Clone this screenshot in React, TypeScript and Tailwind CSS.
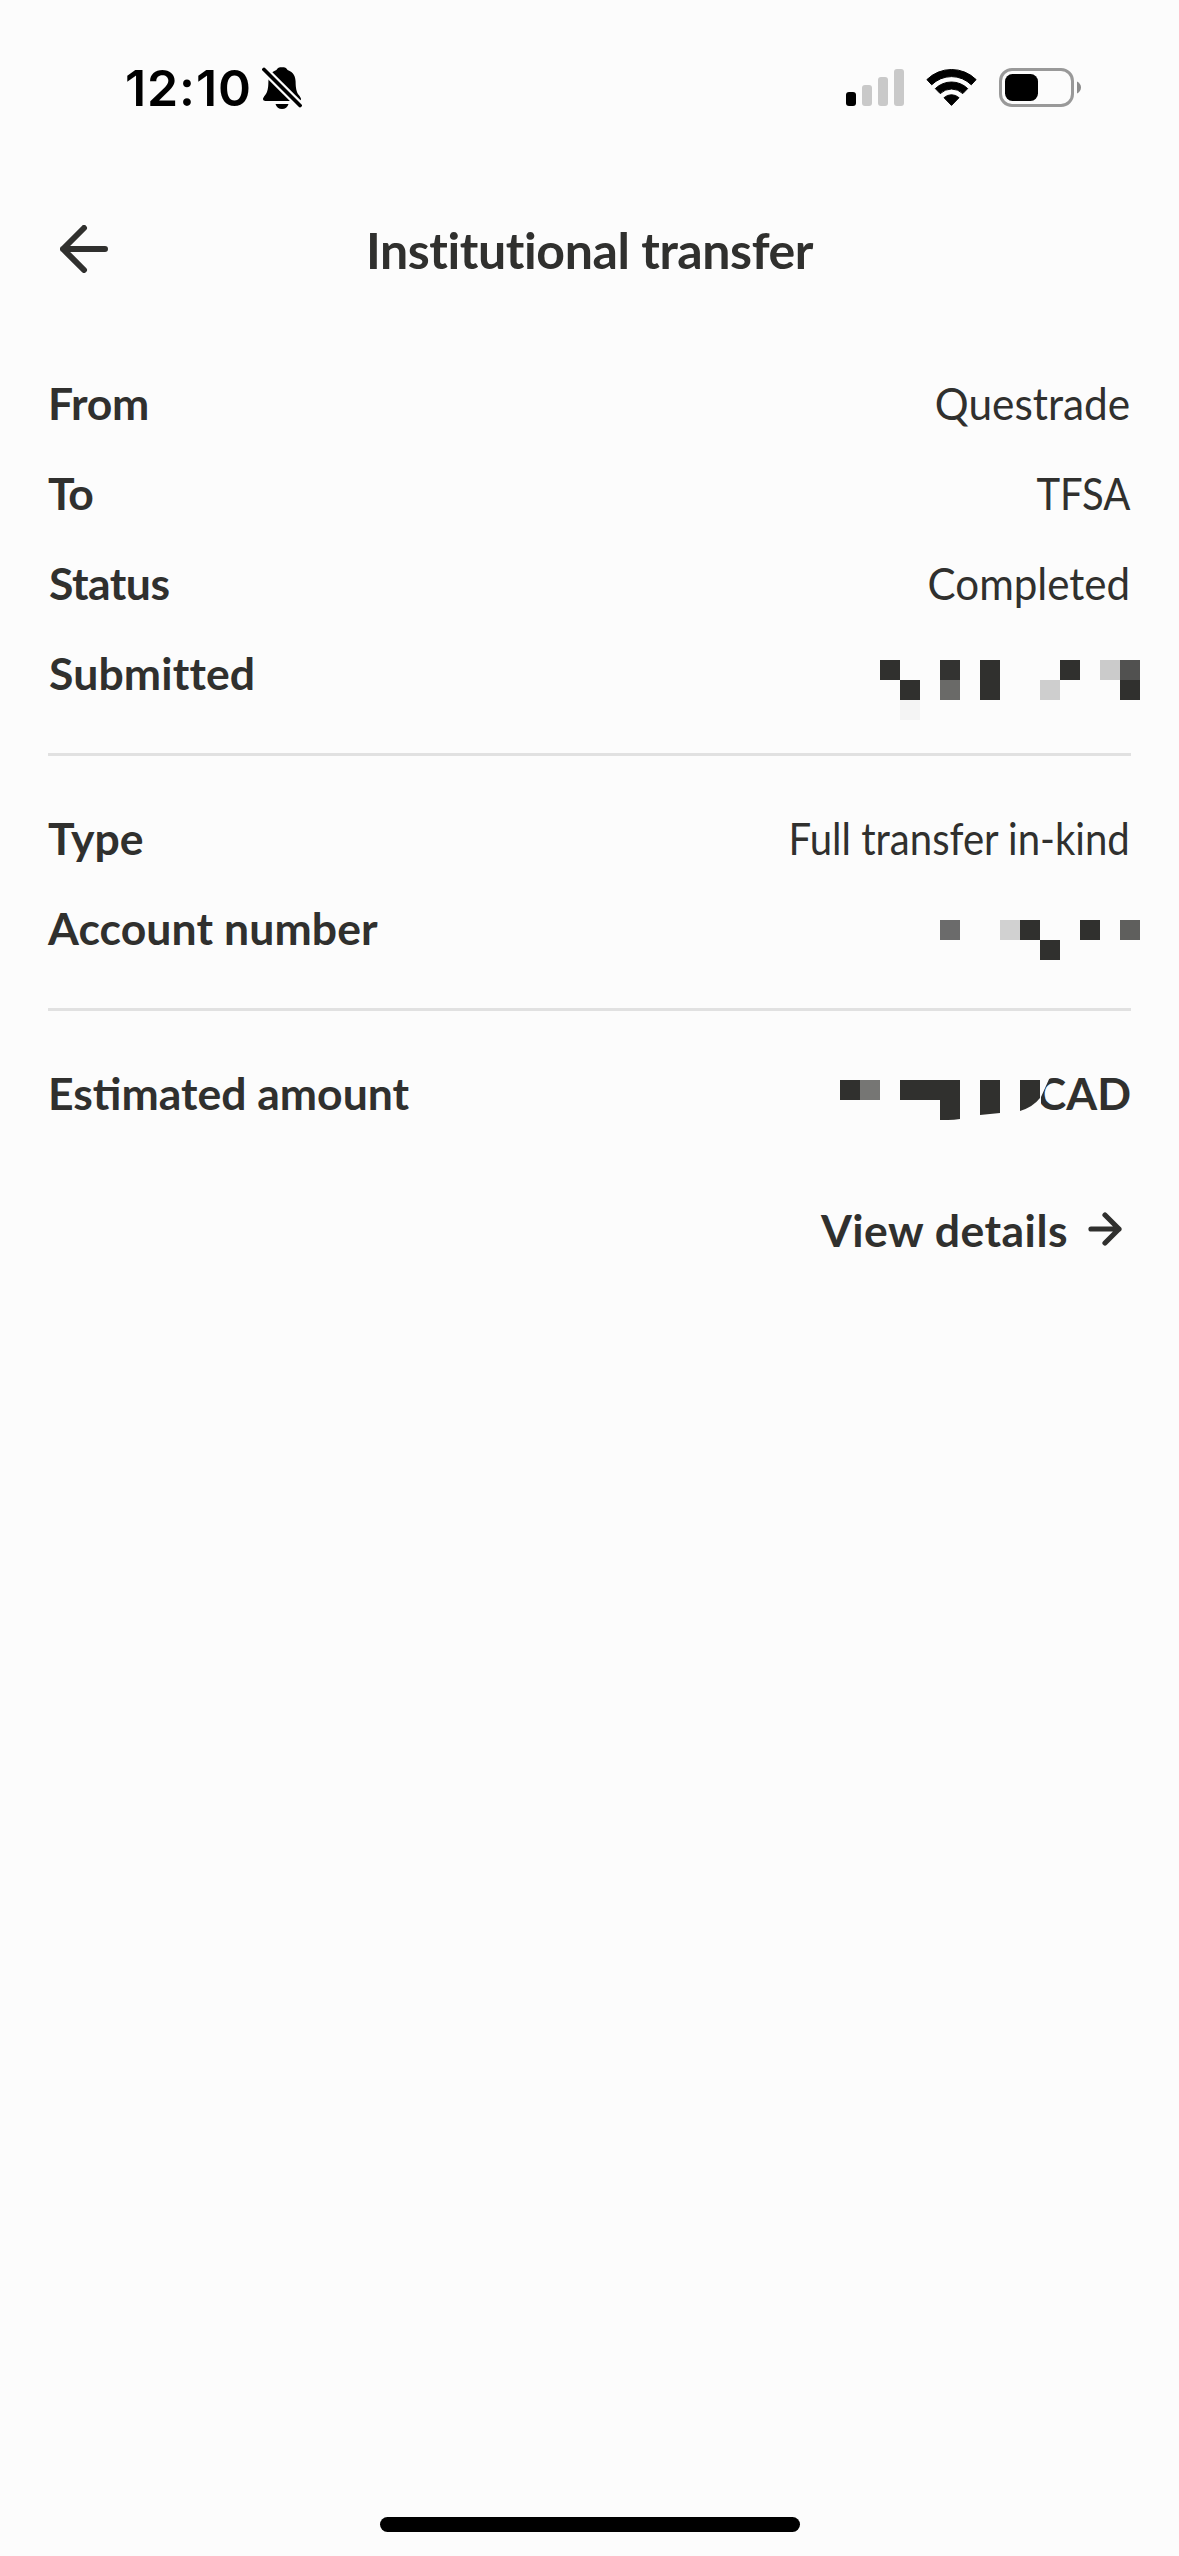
import type { ReactNode } from 'react';

const INK = '#30302e';

function BellSlash() {
  return (
    <svg className="ml-[10px]" width="40" height="44" viewBox="0 0 40 44">
      <path
        d="M20 1c-2.800 0-4.600 1.200-5.600 3-6 2-7.900 6.800-8 11.500-.1 7-.9 10.700-3.200 13.500C1.700 31 1 32 1 33c0 1.300 1 2 2.500 2h33c1.500 0 2.500-.8 2.500-2 0-1-.7-2-2.200-4-2.300-2.800-3.100-6.500-3.200-13.500-.1-4.700-2-9.500-8-11.500-1-1.800-2.800-3-5.600-3z"
        fill="#000"
      />
      <path d="M13.500 38h13c-.8 3-3.300 5-6.500 5s-5.700-2-6.500-5z" fill="#000" />
      <path d="M2 3.500 38.500 40" stroke="#fcfcfc" strokeWidth="8" />
      <path d="M2 3.500 38 39.500" stroke="#000" strokeWidth="3.800" strokeLinecap="round" />
    </svg>
  );
}

function Signal() {
  return (
    <svg width="58" height="38" viewBox="0 0 58 38">
      <rect x="0" y="23" width="10" height="14" rx="3" fill="#000" />
      <rect x="16" y="16" width="10" height="21" rx="3" fill="#c9c9c9" />
      <rect x="32" y="8" width="10" height="29" rx="3" fill="#c9c9c9" />
      <rect x="48" y="0" width="10" height="37" rx="3" fill="#c9c9c9" />
    </svg>
  );
}

function Wifi() {
  return (
    <svg className="ml-[22px]" width="51" height="38" viewBox="0 0 51 38">
      <path d="M.9 10.600a35 35 0 0 1 49.200 0L45.300 15.800a28 28 0 0 0-39.600 0z" fill="#000" stroke="#000" strokeWidth="1" strokeLinejoin="round" />
      <path d="M9.300 19.600a23.200 23.200 0 0 1 32.400 0L36.800 24.600a16.200 16.200 0 0 0-22.600 0z" fill="#000" stroke="#000" strokeWidth="1" strokeLinejoin="round" />
      <path d="M18 28.700a11 11 0 0 1 15 0L25.500 36.400z" fill="#000" stroke="#000" strokeWidth="1" strokeLinejoin="round" />
    </svg>
  );
}

function Battery() {
  return (
    <svg className="-mt-px ml-[22px]" width="82" height="39" viewBox="0 0 82 39">
      <rect x="1.500" y="1.500" width="72" height="36" rx="11.500" fill="none" stroke="#999" strokeWidth="3" />
      <rect x="6" y="6" width="33" height="27" rx="7.500" fill="#000" />
      <path d="M78 13.500c2.400 1 4 3.400 4 6s-1.600 5-4 6z" fill="#8c8c8c" />
    </svg>
  );
}

function Row({ label, children }: { label: ReactNode; children: ReactNode }) {
  return (
    <div className="flex h-[60px] items-start justify-between">
      <div className="font-bold">{label}</div>
      {children}
    </div>
  );
}

/* Each cell is [column, row, colour] on a 20px mosaic. */
type Cell = [number, number, string];

const submittedCells: Cell[] = [
  [0, 0, INK], [3, 0, '#333331'], [5, 0, INK], [9, 0, INK], [11, 0, '#cbcbcb'], [12, 0, '#515150'],
  [1, 1, INK], [3, 1, '#6a6a68'], [5, 1, INK], [8, 1, '#cecece'], [12, 1, INK],
  [1, 2, '#f4f4f4'],
];

const accountCells: Cell[] = [
  [0, 0, '#6b6b6b'], [3, 0, '#d1d1d1'], [4, 0, INK], [7, 0, INK], [9, 0, '#5f5f5d'], [5, 1, INK],
];

function Mosaic({ cells, className }: { cells: Cell[]; className: string }) {
  return (
    <svg className={className} shapeRendering="crispEdges">
      {cells.map(([x, y, fill]) => (
        <rect key={`${x}-${y}`} x={x * 20} y={y * 20} width="20" height="20" fill={fill} />
      ))}
    </svg>
  );
}

export default function App() {
  return (
    <div className="flex h-[2556px] w-[1179px] flex-col bg-[#fcfcfc] font-['Lato',sans-serif] text-[44.5px] leading-[62px] whitespace-nowrap text-[#30302e]">
      <div className="flex h-[176px] items-center pr-[98px] pl-[125px] text-black">
        <span className="font-['Inter',sans-serif] text-[50px] font-semibold tracking-[0.9px]">12:10</span>
        <BellSlash />
        <div className="ml-auto flex items-center">
          <Signal />
          <Wifi />
          <Battery />
        </div>
      </div>

      <header className="mt-[22px] grid h-[102px] grid-cols-[120px_1fr_120px] items-center">
        <svg className="ml-[60px]" width="48" height="48" viewBox="0 0 48 48" fill="none" stroke={INK} strokeWidth="6" strokeLinecap="round" strokeLinejoin="round">
          <path d="M24 3 3 24l21 21M3 24h42" />
        </svg>
        <h1 className="pt-[2px] text-center text-[50px] font-bold tracking-[-0.4px]">Institutional transfer</h1>
      </header>

      <main className="flex flex-col pt-[72px] pr-[48px] pl-[48px]">
        <section className="flex flex-col gap-[30px]">
          <Row label={<span className="tracking-[-0.3px]">From</span>}>
            <span className="mr-[0.6px] origin-right scale-x-[0.952]">Questrade</span>
          </Row>
          <Row label={<span className="tracking-[-1px]">To</span>}>
            <span className="mr-px origin-right scale-x-[0.9]">TFSA</span>
          </Row>
          <Row label={<span className="ml-px tracking-[-0.5px]">Status</span>}>
            <span className="mr-[1.3px] origin-right scale-x-[0.946]">Completed</span>
          </Row>
          <Row label={<span className="ml-px tracking-[0.15px]">Submitted</span>}>
            <Mosaic cells={submittedCells} className="mt-[18px] mr-[-9px] h-[60px] w-[260px] shrink-0" />
          </Row>
        </section>

        <div className="mt-[51px] h-[3px] bg-[#e1e1e1]" />

        <section className="mt-[51px] flex flex-col gap-[30px]">
          <Row label="Type">
            <span className="mr-[1.4px] origin-right scale-x-[0.901]">Full transfer in-kind</span>
          </Row>
          <Row label={<span className="tracking-[0.1px]">Account number</span>}>
            <Mosaic cells={accountCells} className="mt-[23px] mr-[-9px] h-[40px] w-[200px] shrink-0" />
          </Row>
        </section>

        <div className="mt-[51px] h-[3px] bg-[#e1e1e1]" />

        <section className="mt-[51px] flex flex-col">
          <Row label="Estimated amount">
            <div className="relative">
              <span className="font-bold">CAD</span>
              <svg className="absolute top-0 right-0 h-[60px] w-[291px]" viewBox="840 1062 291 60">
                <path d="M1030 1068h20v9l-9 20v8h-11z" fill="#fcfcfc" />
                <path d="M840 1080h20v20h-20z" fill={INK} />
                <path d="M860 1080h20v20h-20z" fill="#767674" />
                <path d="M900 1080h60v39q-6 1-12 1h-8v-20h-40z" fill={INK} />
                <path d="M980 1080h20v33l-20 2z" fill={INK} />
                <path d="M1020 1080h20v18q-7 9-20 13z" fill={INK} />
              </svg>
            </div>
          </Row>

          <a className="mt-[76px] flex items-center justify-end pr-[9px] font-bold">
            <span className="pt-px tracking-[0.5px]">View details</span>
            <svg className="ml-[20px] -mt-[2px]" width="34" height="34" viewBox="0 0 34 34" fill="none" stroke={INK} strokeWidth="5.200" strokeLinecap="round" strokeLinejoin="round">
              <path d="M17 3 31 17 17 31M31 17H3" />
            </svg>
          </a>
        </section>
      </main>

      <div className="mt-auto mb-[24px] h-[15px] w-[420px] self-center rounded-full bg-black" />
    </div>
  );
}
